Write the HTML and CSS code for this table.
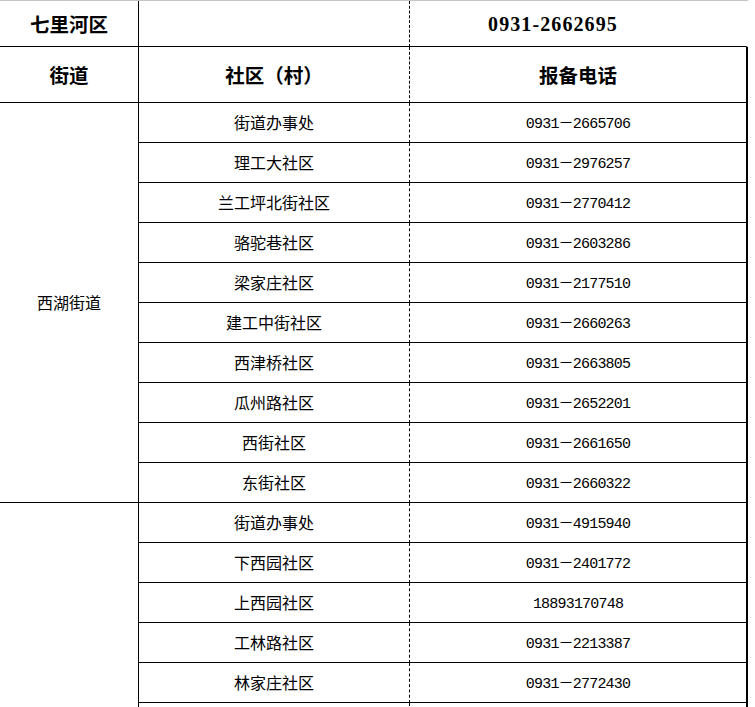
FILE: index.html
```html
<!DOCTYPE html>
<html lang="zh-CN">
<head>
<meta charset="utf-8">
<title>七里河区 报备电话</title>
<link rel="stylesheet" href="styles.css">
</head>
<body>
<div class="sheet">
  <div class="cell head c1">七里河区</div>
  <div class="cell c2"></div>
  <div class="cell head-phone c3 top">0931-2662695</div>

  <div class="cell head c1">街道</div>
  <div class="cell head c2">社区（村）</div>
  <div class="cell head c3">报备电话</div>

  <div class="cell c1 group1">西湖街道</div>
  <div class="cell c2">街道办事处</div><div class="cell num c3">0931－2665706</div>
  <div class="cell c2">理工大社区</div><div class="cell num c3">0931－2976257</div>
  <div class="cell c2">兰工坪北街社区</div><div class="cell num c3">0931－2770412</div>
  <div class="cell c2">骆驼巷社区</div><div class="cell num c3">0931－2603286</div>
  <div class="cell c2">梁家庄社区</div><div class="cell num c3">0931－2177510</div>
  <div class="cell c2">建工中街社区</div><div class="cell num c3">0931－2660263</div>
  <div class="cell c2">西津桥社区</div><div class="cell num c3">0931－2663805</div>
  <div class="cell c2">瓜州路社区</div><div class="cell num c3">0931－2652201</div>
  <div class="cell c2">西街社区</div><div class="cell num c3">0931－2661650</div>
  <div class="cell c2">东街社区</div><div class="cell num c3">0931－2660322</div>

  <div class="cell c1 group2"></div>
  <div class="cell c2">街道办事处</div><div class="cell num c3">0931－4915940</div>
  <div class="cell c2">下西园社区</div><div class="cell num c3">0931－2401772</div>
  <div class="cell c2">上西园社区</div><div class="cell num c3">18893170748</div>
  <div class="cell c2">工林路社区</div><div class="cell num c3">0931－2213387</div>
  <div class="cell c2">林家庄社区</div><div class="cell num c3">0931－2772430</div>
  <div class="cell c2"></div><div class="cell num c3"></div>
</div>
</body>
</html>
```

FILE: styles.css
```css
html, body {
  margin: 0;
  padding: 0;
  background: #ffffff;
}

body {
  overflow: hidden;
  font-family: "Noto Sans CJK SC", "Noto Sans", sans-serif;
  color: #000000;
}

.sheet {
  display: grid;
  grid-template-columns: 139px 271px 338px;
  grid-template-rows: 46px 56px repeat(16, 40px);
  width: 748px;
  border-top: 1px solid #c4c4c4;
}

.cell {
  box-sizing: border-box;
  display: flex;
  align-items: center;
  justify-content: center;
  border-bottom: 1px solid #000000;
  font-size: 16px;
  line-height: 1;
  white-space: nowrap;
  padding-bottom: 1px;
}

.c1 {
  border-right: 1px solid #000000;
}

.c2 {
  border-right: 1px dashed #000000;
}

.c3 {
  border-right: 2px solid #000000;
}

.c3.top {
  border-right: 2px solid transparent;
}

.head {
  font-size: 19.5px;
  font-weight: 700;
  padding-bottom: 0;
  padding-top: 1px;
}

.head-phone {
  font-family: "Liberation Serif", serif;
  font-weight: 700;
  font-size: 20px;
  letter-spacing: 1.1px;
  padding-top: 1px;
  padding-bottom: 0;
  padding-right: 50px;
}

.num {
  font-family: "Liberation Mono", "Noto Sans CJK SC", monospace;
  font-size: 15px;
  letter-spacing: -0.8px;
  padding-top: 3px;
  padding-bottom: 0;
}

.group1 {
  grid-row: span 10;
}

.group2 {
  grid-row: span 6;
}
```
